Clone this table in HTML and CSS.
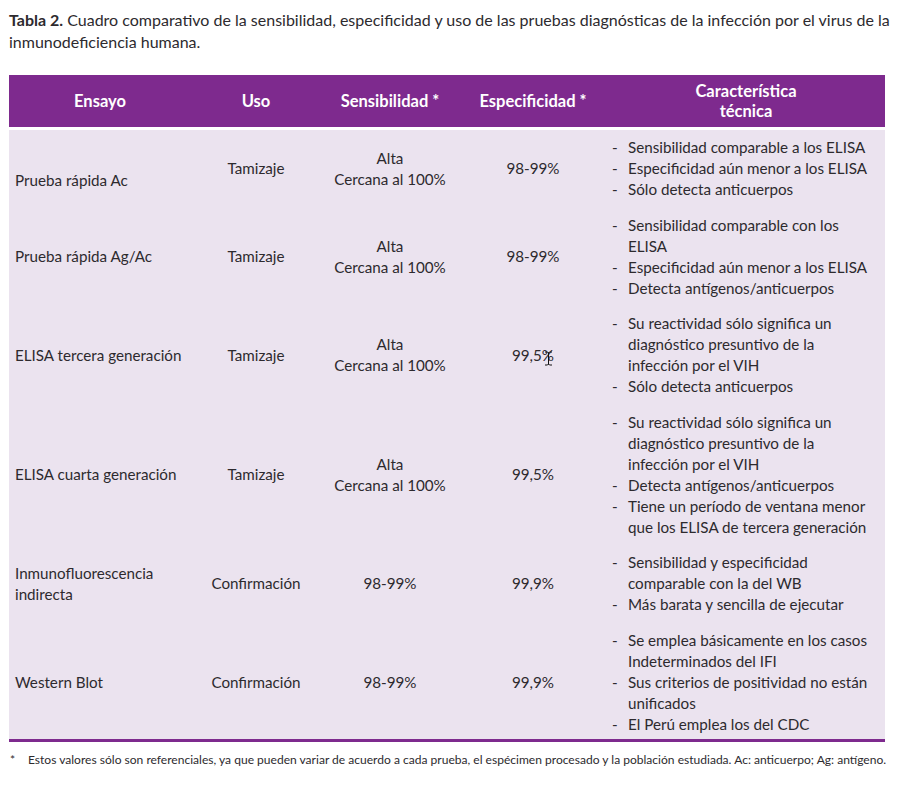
FILE: index.html
```html
<!DOCTYPE html>
<html lang="es">
<head>
<meta charset="utf-8">
<link rel="stylesheet" href="styles.css">
</head>
<body>
<p class="title"><b>Tabla 2.</b> Cuadro comparativo de la sensibilidad, especificidad y uso de las pruebas diagnósticas de la infección por el virus de la inmunodeficiencia humana.</p>

<div class="table">
  <div class="row head">
    <div class="c">Ensayo</div>
    <div class="c">Uso</div>
    <div class="c">Sensibilidad *</div>
    <div class="c">Especificidad *</div>
    <div class="c">Característica<br>técnica</div>
  </div>
  <div class="body">
    <div class="row">
      <div class="name low">Prueba rápida Ac</div>
      <div class="c">Tamizaje</div>
      <div class="c">Alta<br>Cercana al 100%</div>
      <div class="c">98-99%</div>
      <ul class="list">
        <li>Sensibilidad comparable a los ELISA</li>
        <li>Especificidad aún menor a los ELISA</li>
        <li>Sólo detecta anticuerpos</li>
      </ul>
    </div>
    <div class="row">
      <div class="name">Prueba rápida Ag/Ac</div>
      <div class="c">Tamizaje</div>
      <div class="c">Alta<br>Cercana al 100%</div>
      <div class="c">98-99%</div>
      <ul class="list">
        <li>Sensibilidad comparable con los ELISA</li>
        <li>Especificidad aún menor a los ELISA</li>
        <li>Detecta antígenos/anticuerpos</li>
      </ul>
    </div>
    <div class="row">
      <div class="name">ELISA tercera generación</div>
      <div class="c">Tamizaje</div>
      <div class="c">Alta<br>Cercana al 100%</div>
      <div class="c"><span class="cur">99,5%<svg class="ibeam" width="9" height="15" viewBox="0 0 9 15"><path d="M1 1h2.5M5.5 1H8M4.5 1.5v12M1 14h2.5M5.5 14H8M3.5 1l1 1 1-1M3.5 14l1-1 1 1" fill="none" stroke="#111" stroke-width="1"/></svg></span></div>
      <ul class="list">
        <li>Su reactividad sólo significa un diagnóstico presuntivo de la infección por el VIH</li>
        <li>Sólo detecta anticuerpos</li>
      </ul>
    </div>
    <div class="row">
      <div class="name">ELISA cuarta generación</div>
      <div class="c">Tamizaje</div>
      <div class="c">Alta<br>Cercana al 100%</div>
      <div class="c">99,5%</div>
      <ul class="list">
        <li>Su reactividad sólo significa un diagnóstico presuntivo de la infección por el VIH</li>
        <li>Detecta antígenos/anticuerpos</li>
        <li>Tiene un período de ventana menor que los ELISA de tercera generación</li>
      </ul>
    </div>
    <div class="row">
      <div class="name">Inmunofluorescencia<br>indirecta</div>
      <div class="c">Confirmación</div>
      <div class="c">98-99%</div>
      <div class="c">99,9%</div>
      <ul class="list">
        <li>Sensibilidad y especificidad comparable con la del WB</li>
        <li>Más barata y sencilla de ejecutar</li>
      </ul>
    </div>
    <div class="row">
      <div class="name">Western Blot</div>
      <div class="c">Confirmación</div>
      <div class="c">98-99%</div>
      <div class="c">99,9%</div>
      <ul class="list">
        <li>Se emplea básicamente en los casos Indeterminados del IFI</li>
        <li>Sus criterios de positividad no están unificados</li>
        <li>El Perú emplea los del CDC</li>
      </ul>
    </div>
  </div>
</div>

<p class="note"><span class="star">*</span>Estos valores sólo son referenciales, ya que pueden variar de acuerdo a cada prueba, el espécimen procesado y la población estudiada. Ac: anticuerpo; Ag: antígeno.</p>
</body>
</html>
```

FILE: styles.css
```css
html, body {
  margin: 0;
  padding: 0;
  background: #ffffff;
}
body {
  font-family: Lato, "Open Sans", sans-serif;
  color: #2d2a2e;
}
.title {
  margin: 0;
  padding: 9px 10px 0 9px;
  font-size: 16px;
  line-height: 22px;
  height: 57px;
}
.title b {
  font-weight: 700;
}
.table {
  margin: 9px 20px 0 9px;
  width: 876px;
}
.row {
  display: grid;
  grid-template-columns: 182px 130px 138px 148px 1fr;
  align-items: center;
}
.head {
  background: #7e2a8e;
  color: #ffffff;
  font-weight: 700;
  font-size: 16.5px;
  line-height: 20px;
  height: 52px;
}
.c {
  text-align: center;
}
.body {
  margin-top: 3px;
  background: #ebe3ef;
  border-bottom: 3px solid #7e2a8e;
  font-size: 15.2px;
  line-height: 21px;
}
.body .row {
  padding: 7px 0 7.6px;
}
.body .row:last-child {
  padding-bottom: 4px;
}
.name {
  padding-left: 6px;
}
.name.low {
  padding-top: 24px;
}
.cur {
  position: relative;
}
.ibeam {
  position: absolute;
  left: 32px;
  top: 5px;
}
.list {
  list-style: none;
  margin: 0;
  padding: 0 12px 0 5px;
}
.list li {
  display: flex;
}
.list li::before {
  content: "-";
  flex: 0 0 16px;
}
.note {
  margin: 11px 0 0 10px;
  font-size: 12.05px;
  line-height: 14px;
  display: flex;
}
.star {
  flex: 0 0 18px;
}
```
